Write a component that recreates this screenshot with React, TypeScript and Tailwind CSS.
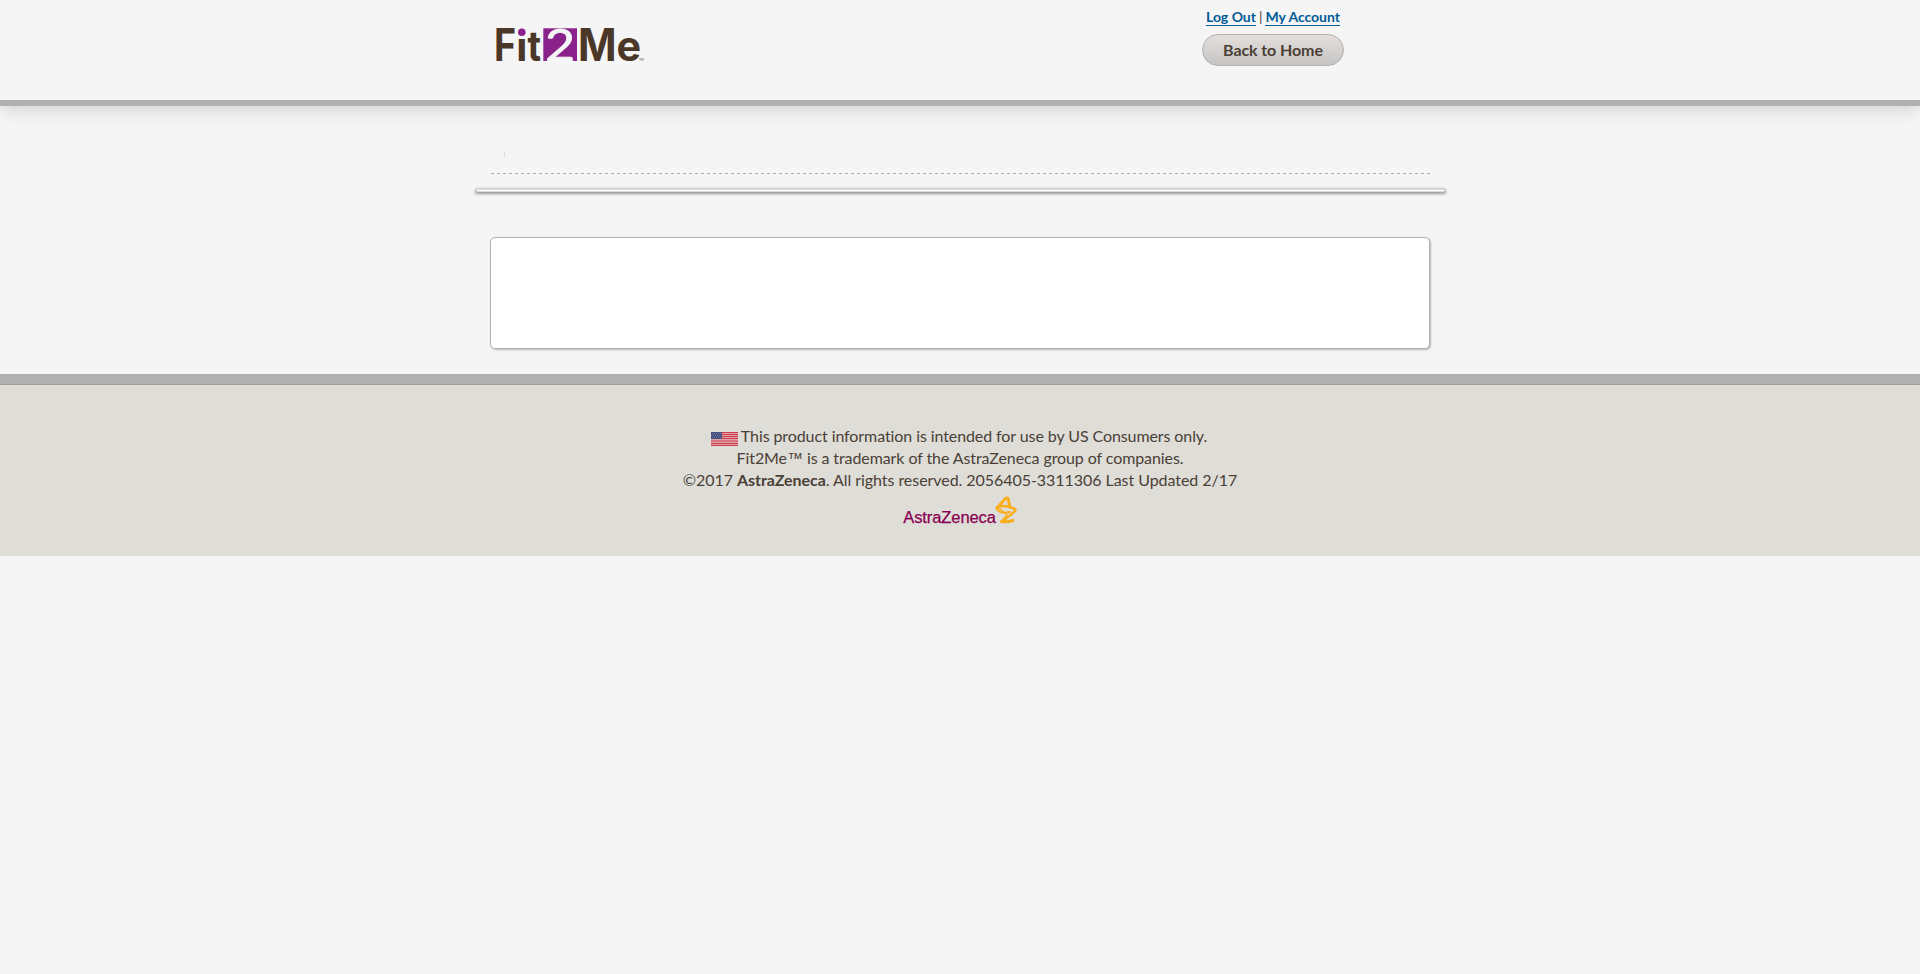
function FitLogo() {
  return (
    <svg className="block" width="157" height="66" viewBox="-4 -18 157 66" aria-label="Fit2Me">
      <rect x="47.3" y="1.3" width="33.7" height="32.7" fill="#8b218b" />
      <g fontFamily="Inter, sans-serif" fontWeight="700" fill="#4b3728">
        <text x="-2" y="34.2" fontSize="45" textLength="22" lengthAdjust="spacingAndGlyphs">F</text>
        <text x="20.2" y="34.2" fontSize="40" textLength="11" lengthAdjust="spacingAndGlyphs">ı</text>
        <text x="31.5" y="34.2" fontSize="41" textLength="13.5" lengthAdjust="spacingAndGlyphs">t</text>
        <text x="82" y="34.2" fontSize="45" textLength="38.5" lengthAdjust="spacingAndGlyphs">M</text>
        <text x="120.5" y="34.2" fontSize="41" textLength="24.5" lengthAdjust="spacingAndGlyphs">e</text>
      </g>
      <circle cx="25.8" cy="5.3" r="3.8" fill="#8b218b" />
      <text x="49" y="34" fontSize="45" fontFamily="Lato, sans-serif" fontWeight="400" fill="#f5f5f5" stroke="#f5f5f5" strokeWidth=".8" textLength="30" lengthAdjust="spacingAndGlyphs">2</text>
      <text x="143" y="34" fontSize="3" fontFamily="Lato, sans-serif" fill="#4b3728">TM</text>
    </svg>
  );
}

function Flag() {
  return (
    <svg className="mt-[7px] mr-[3px] block" width="27" height="14" viewBox="0 0 27 14">
      <rect width="27" height="14" fill="#e0a3a6" />
      <path d="M0 .5H27M0 2.5H27M0 4.5H27M0 6.5H27M0 11.5H27M0 13.5H27" stroke="#cc3a4c" />
      <path d="M0 8.5H27M0 9.5H27" stroke="#d97379" />
      <rect width="11" height="7" fill="#46507f" />
      <path d="M1 1.5H11M0 3.5H11M1 5.5H11" stroke="#8189aa" strokeWidth=".7" strokeDasharray="1 1" />
    </svg>
  );
}

function AstraLogo() {
  return (
    <svg className="block" width="116" height="34" viewBox="0 0 116 34" aria-label="AstraZeneca">
      <text x="1.3" y="27" fontSize="16" fontFamily="'Liberation Sans', sans-serif" fill="#8a0051" stroke="#8a0051" strokeWidth=".25" textLength="92.5" lengthAdjust="spacingAndGlyphs">AstraZeneca</text>
      <g fill="none" stroke="#f9ae1b" strokeLinejoin="round" strokeLinecap="round">
        <path d="M94.8 12L104 2L106 2.3L108 11" strokeWidth="3" />
        <path d="M94.8 12.5C96.5 16.5 102 17.5 108 16" strokeWidth="2" />
        <path d="M97 10.5C103 9 108 10.500 113.5 13.5C113.5 16.5 107 19.500 101.500 24.500" strokeWidth="2.6" />
        <path d="M97 12L105 19L99.5 25" strokeWidth="1.4" />
        <path d="M99.500 25.5C104 26.2 108 25.5 111 24.500" strokeWidth="3" />
      </g>
    </svg>
  );
}

export default function App() {
  return (
    <div className="min-h-[974px] bg-[#f5f5f5] font-[Lato,sans-serif] text-[16px] leading-[22px] tracking-[-0.09px] text-[#4b3f36]">
      <header className="h-[106px] border-b-[6px] border-[#b1b1b1] shadow-[0_0_20px_rgba(0,0,0,0.2)]">
        <div className="mx-auto flex w-[940px] justify-between pr-[86px] pl-[2px]">
          <div className="pt-[9px]"><FitLogo /></div>
          <div className="flex flex-col items-center pt-[8px]">
            <div className="flex gap-[3px] text-[14px] leading-[17px] tracking-[-0.02px]">
              <a className="border-b border-[#005c97] font-bold text-[#005c97]" href="#">Log Out</a>
              <span>|</span>
              <a className="border-b border-[#005c97] font-bold text-[#005c97]" href="#">My Account</a>
            </div>
            <button className="mt-[8px] h-[32px] w-[142px] rounded-full border border-[#b1b1b1] bg-linear-to-b from-[#e4dfdc] to-[#c6c5c4] text-[16px] leading-[30px] font-bold">Back to Home</button>
          </div>
        </div>
      </header>
      <main className="mx-auto w-[970px]">
        <div className="mx-[15px] flex h-[67px] items-end pb-[16px] pl-[14px]">
          <div className="h-[5px] w-px bg-[#dadada]" />
        </div>
        <div className="mx-[15px] h-px bg-[repeating-linear-gradient(90deg,#b1b1b1_0_1px,#b1b1b1_1px_3px,transparent_3px_6px)] bg-[position:1px_0]" />
        <div className="mt-[15px] ml-[1px] h-[3px] rounded-[2px] border border-[#d9d9d9] bg-white shadow-[0_1px_3px_1px_rgba(0,0,0,0.38)]" />
        <section className="mx-[15px] mt-[45px] h-[112px] rounded-[5px] border border-[#b1b1b1] bg-white shadow-[1px_1px_2px_rgba(0,0,0,0.25)]" />
      </main>
      <footer className="mt-[25px] flex h-[182px] flex-col items-center border-t-[10px] border-[#b1b1b1] bg-[#deddd8]">
        <div className="h-px w-full bg-[#9f9f98]" />
        <p className="mt-[40px] flex pr-[2px]"><Flag />This product information is intended for use by US Consumers only.</p>
        <p>Fit2Me<span className="font-['Liberation_Sans',sans-serif] leading-none">™</span> is a trademark of the AstraZeneca group of companies.</p>
        <p className="tracking-[-0.05px]">©2017 <strong>AstraZeneca</strong>. All rights reserved. 2056405-3311306 Last Updated 2/17</p>
        <div className="mt-[5px]"><AstraLogo /></div>
      </footer>
    </div>
  );
}
